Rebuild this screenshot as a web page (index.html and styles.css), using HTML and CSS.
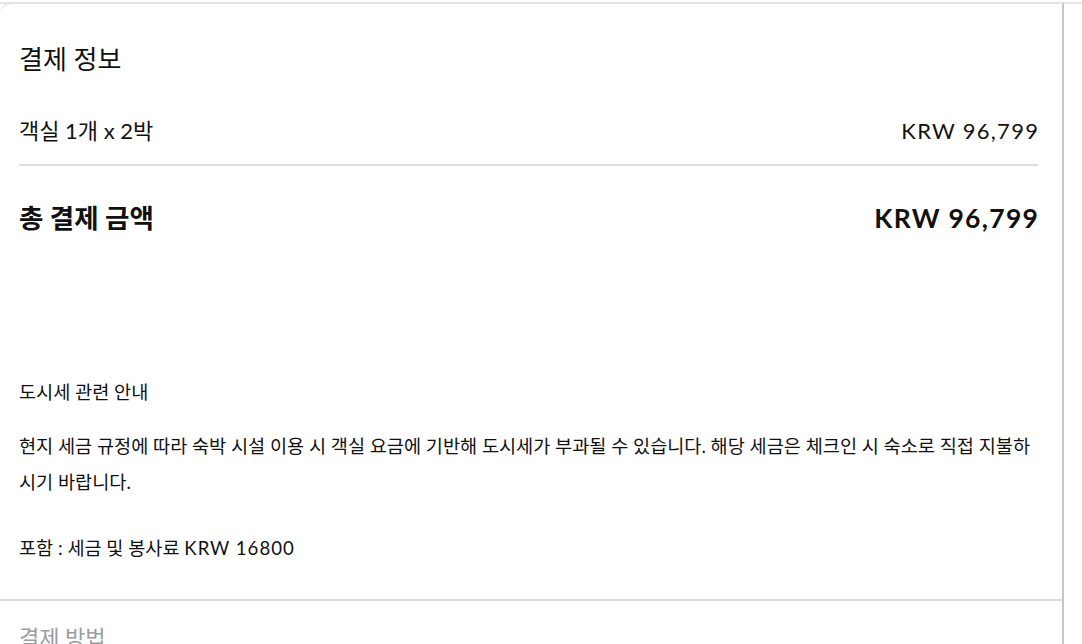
FILE: index.html
```html
<!DOCTYPE html>
<html lang="ko">
<head>
<meta charset="utf-8">
<link rel="stylesheet" href="styles.css">
</head>
<body>
<div class="card">
  <section class="summary">
    <h2 class="title">결제 정보</h2>
    <div class="row line-item">
      <span>객실 1개 x 2박</span>
      <span class="amount">KRW 96,799</span>
    </div>
    <div class="row total">
      <span>총 결제 금액</span>
      <span class="amount">KRW 96,799</span>
    </div>
    <div class="notice">
      <p class="notice-title">도시세 관련 안내</p>
      <p class="notice-body">현지 세금 규정에 따라 숙박 시설 이용 시 객실 요금에 기반해 도시세가 부과될 수 있습니다. 해당 세금은 체크인 시 숙소로 직접 지불하시기 바랍니다.</p>
      <p class="notice-inc">포함 : 세금 및 봉사료 <span class="amount">KRW 16800</span></p>
    </div>
  </section>
  <section class="method">
    <h2 class="method-title">결제 방법</h2>
  </section>
</div>
</body>
</html>
```
FILE: styles.css
```css
html, body {
  margin: 0;
  padding: 0;
  background: #ffffff;
}
body {
  font-family: Lato, "Noto Sans CJK KR", sans-serif;
  color: #111111;
  background: linear-gradient(#e6e6ea, #e6e6ea) no-repeat 0 2px / 100% 2px, #ffffff;
  height: 644px;
  overflow: hidden;
}
.card {
  margin-top: 2px;
  width: 1062px;
  border-top: 2px solid #e4e4e8;
  border-right: 2px solid #c5c8cc;
  border-top-left-radius: 12px;
  background: #ffffff;
  min-height: 660px;
}
.summary {
  padding: 0 24px 0 19px;
}
.title {
  margin: 0;
  padding-top: 39px;
  font-size: 26px;
  line-height: 32px;
  font-weight: 400;
}
.row {
  display: flex;
  justify-content: space-between;
  align-items: center;
}
.amount {
  letter-spacing: 1.3px;
}
.row .amount {
  margin-right: -1.3px;
}
.line-item {
  margin-top: 44px;
  font-size: 22px;
  line-height: 24px;
  height: 24px;
  padding-bottom: 21px;
  border-bottom: 2px solid #dddde2;
}
.total {
  margin-top: 36px;
  font-size: 26.5px;
  line-height: 32px;
  height: 32px;
  font-weight: 700;
}
.notice {
  margin-top: 146px;
  padding-bottom: 39px;
  font-size: 18.6px;
}
.notice p {
  margin: 0;
}
.notice-title {
  line-height: 24px;
}
.notice-body {
  margin-top: 24px !important;
  line-height: 36px;
  word-break: break-all;
}
.notice-inc {
  margin-top: 36px !important;
  line-height: 24px;
}
.notice-inc .amount {
  letter-spacing: 1px;
}
.method {
  border-top: 2px solid #dddde2;
  padding: 22px 19px 0;
}
.method-title {
  margin: 0;
  font-size: 22px;
  line-height: 30px;
  font-weight: 400;
  color: #9a9ca2;
}
```
